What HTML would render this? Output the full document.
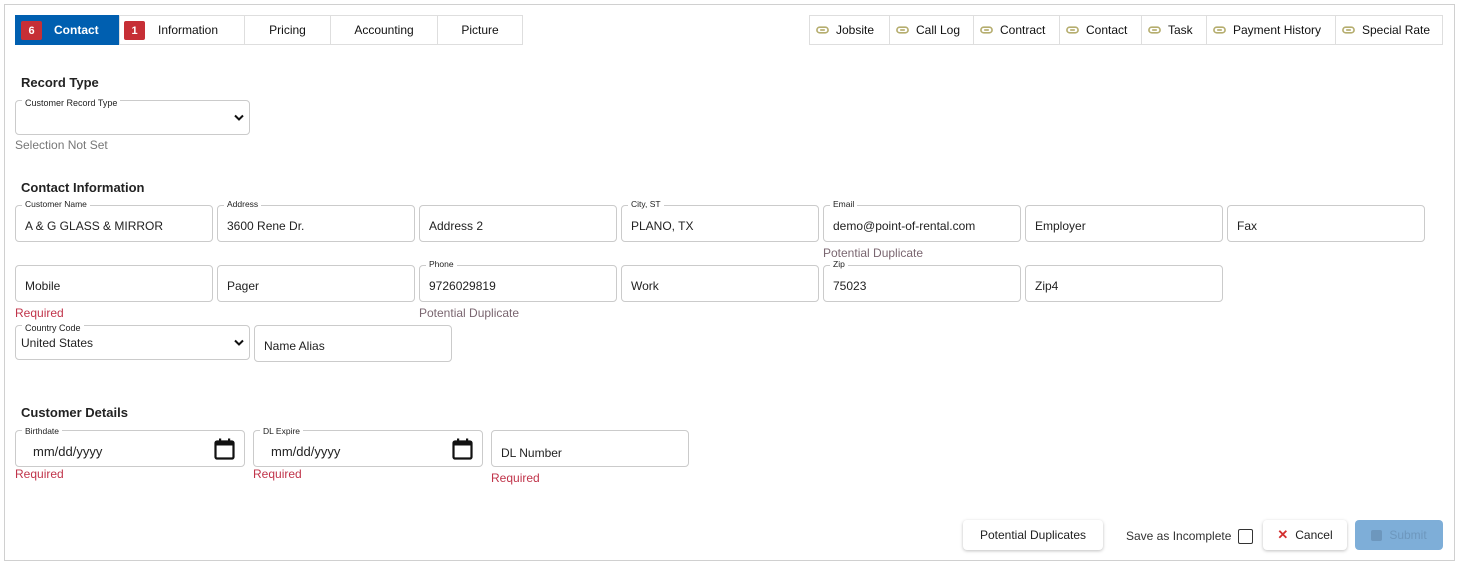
<!DOCTYPE html>
<html><head><meta charset="utf-8"><style>
*{box-sizing:border-box;margin:0;padding:0}
body{width:1459px;height:566px;background:#fff;font-family:"Liberation Sans",Arial,sans-serif;position:relative;overflow:hidden;color:#222}
.frame{position:absolute;left:4px;top:4px;width:1451px;height:557px;border:1px solid #d0d0d0}
.a{position:absolute}
.tab{position:absolute;top:15px;height:30px;border:1px solid #dedede;font-size:12px;display:flex;align-items:center;justify-content:center;color:#111}
.badge{position:absolute;top:5px;width:21px;height:19px;background:#c62f36;color:#fff;font-size:11px;font-weight:bold;border-radius:2px;display:flex;align-items:center;justify-content:center}
.rt{position:absolute;top:15px;height:30px;border:1px solid #dedede;font-size:12px;display:flex;align-items:center;padding-left:6px;color:#111}
.rt svg{margin-right:7px}
h3{position:absolute;font-size:13px;font-weight:bold;color:#222}
.f{position:absolute;height:37px;border:1px solid #cbcbcb;border-radius:4px;font-size:12px;color:#222;padding-left:9px;display:flex;align-items:center;padding-top:5px}
.f.v{padding-top:4px}
.lb{position:absolute;top:-7px;left:6px;font-size:8.5px;background:#fff;padding:0 3px;color:#222;line-height:10px}
.err{position:absolute;font-size:12px;color:#c0344a}
.dup{position:absolute;font-size:12px;color:#7a6670}
</style></head><body>
<div class="frame"></div>

<div class="tab" style="left:15px;width:105px;background:#005fb0;border-color:#005fb0;color:#fff;font-weight:bold;justify-content:flex-start;padding-left:38px">Contact<div class="badge" style="left:5px">6</div></div>
<div class="tab" style="left:119px;width:126px;justify-content:flex-start;padding-left:38px">Information<div class="badge" style="left:4px">1</div></div>
<div class="tab" style="left:244px;width:87px">Pricing</div>
<div class="tab" style="left:330px;width:108px">Accounting</div>
<div class="tab" style="left:437px;width:86px">Picture</div>

<svg width="0" height="0" style="position:absolute"><defs><symbol id="lk" viewBox="0 0 14 8"><rect x="1" y="1" width="12" height="6" rx="3" fill="none" stroke="#b5ad6e" stroke-width="1.8"/><line x1="4.5" y1="4" x2="9.5" y2="4" stroke="#b5ad6e" stroke-width="1.8"/></symbol></defs></svg>
<div class="rt" style="left:809px;width:81px"><svg width="13" height="8"><use href="#lk"/></svg>Jobsite</div>
<div class="rt" style="left:889px;width:85px"><svg width="13" height="8"><use href="#lk"/></svg>Call Log</div>
<div class="rt" style="left:973px;width:87px"><svg width="13" height="8"><use href="#lk"/></svg>Contract</div>
<div class="rt" style="left:1059px;width:83px"><svg width="13" height="8"><use href="#lk"/></svg>Contact</div>
<div class="rt" style="left:1141px;width:66px"><svg width="13" height="8"><use href="#lk"/></svg>Task</div>
<div class="rt" style="left:1206px;width:130px"><svg width="13" height="8"><use href="#lk"/></svg>Payment History</div>
<div class="rt" style="left:1335px;width:108px"><svg width="13" height="8"><use href="#lk"/></svg>Special Rate</div>

<h3 style="left:21px;top:75px">Record Type</h3>
<div class="f" style="left:15px;top:100px;width:235px;height:35px"><span class="lb" style="top:-3px;font-size:9px">Customer Record Type</span><svg class="a" style="right:5px;top:13px" width="10" height="7"><path d="M1 1.5L5 5.5L9 1.5" stroke="#111" stroke-width="2" fill="none"/></svg></div>
<div class="dup" style="left:15px;top:138px;color:#777">Selection Not Set</div>

<h3 style="left:21px;top:180px">Contact Information</h3>
<div class="f v" style="left:15px;top:205px;width:198px"><span class="lb">Customer Name</span>A &amp; G GLASS &amp; MIRROR</div>
<div class="f v" style="left:217px;top:205px;width:198px"><span class="lb">Address</span>3600 Rene Dr.</div>
<div class="f" style="left:419px;top:205px;width:198px">Address 2</div>
<div class="f v" style="left:621px;top:205px;width:198px"><span class="lb">City, ST</span>PLANO, TX</div>
<div class="f v" style="left:823px;top:205px;width:198px"><span class="lb">Email</span>demo@point-of-rental.com</div>
<div class="f" style="left:1025px;top:205px;width:198px">Employer</div>
<div class="f" style="left:1227px;top:205px;width:198px">Fax</div>
<div class="dup" style="left:823px;top:246px">Potential Duplicate</div>

<div class="f" style="left:15px;top:265px;width:198px">Mobile</div>
<div class="f" style="left:217px;top:265px;width:198px">Pager</div>
<div class="f v" style="left:419px;top:265px;width:198px"><span class="lb">Phone</span>9726029819</div>
<div class="f" style="left:621px;top:265px;width:198px">Work</div>
<div class="f v" style="left:823px;top:265px;width:198px"><span class="lb">Zip</span>75023</div>
<div class="f" style="left:1025px;top:265px;width:198px">Zip4</div>
<div class="err" style="left:15px;top:306px">Required</div>
<div class="dup" style="left:419px;top:306px">Potential Duplicate</div>

<div class="f" style="left:15px;top:325px;width:235px;height:35px;padding-left:5px;padding-top:0;align-items:flex-start"><span class="lb" style="top:-3px;font-size:9px">Country Code</span><span style="margin-top:10px">United States</span><svg class="a" style="right:5px;top:13px" width="10" height="7"><path d="M1 1.5L5 5.5L9 1.5" stroke="#111" stroke-width="2" fill="none"/></svg></div>
<div class="f" style="left:254px;top:325px;width:198px">Name Alias</div>

<h3 style="left:21px;top:405px">Customer Details</h3>
<div class="f" style="left:15px;top:430px;width:230px;padding-left:17px;font-size:13px"><span class="lb" style="top:-5px">Birthdate</span>mm/dd/yyyy<svg class="a" style="right:9px;top:7px" width="21" height="22" viewBox="0 0 21 22"><rect x="1.5" y="3.5" width="18" height="17" rx="1.5" fill="none" stroke="#111" stroke-width="2.2"/><rect x="1.5" y="3.5" width="18" height="4" fill="#111"/><rect x="5" y="0.5" width="2.2" height="4" fill="#111"/><rect x="14" y="0.5" width="2.2" height="4" fill="#111"/></svg></div>
<div class="f" style="left:253px;top:430px;width:230px;padding-left:17px;font-size:13px"><span class="lb" style="top:-5px">DL Expire</span>mm/dd/yyyy<svg class="a" style="right:9px;top:7px" width="21" height="22" viewBox="0 0 21 22"><rect x="1.5" y="3.5" width="18" height="17" rx="1.5" fill="none" stroke="#111" stroke-width="2.2"/><rect x="1.5" y="3.5" width="18" height="4" fill="#111"/><rect x="5" y="0.5" width="2.2" height="4" fill="#111"/><rect x="14" y="0.5" width="2.2" height="4" fill="#111"/></svg></div>
<div class="f" style="left:491px;top:430px;width:198px;padding-top:8px">DL Number</div>
<div class="err" style="left:15px;top:467px">Required</div>
<div class="err" style="left:253px;top:467px">Required</div>
<div class="err" style="left:491px;top:471px">Required</div>

<div class="a" style="left:963px;top:520px;width:140px;height:30px;border-radius:4px;box-shadow:0 1px 3px rgba(0,0,0,.25);font-size:12px;display:flex;align-items:center;justify-content:center">Potential Duplicates</div>
<div class="a" style="left:1126px;top:529px;font-size:12px;color:#333">Save as Incomplete</div>
<div class="a" style="left:1238px;top:529px;width:15px;height:15px;border:1.5px solid #333;border-radius:2px"></div>
<div class="a" style="left:1263px;top:520px;width:84px;height:30px;border-radius:4px;box-shadow:0 1px 3px rgba(0,0,0,.25);font-size:12px;display:flex;align-items:center;justify-content:center"><span style="color:#d32f2f;font-weight:bold;margin-right:7px;font-size:13px">✕</span>Cancel</div>
<div class="a" style="left:1355px;top:520px;width:88px;height:30px;border-radius:4px;background:#7eaed8;font-size:12px;color:#6d97bd;display:flex;align-items:center;justify-content:center"><span style="display:inline-block;width:11px;height:11px;background:#6d97bd;border-radius:2px;margin-right:7px"></span>Submit</div>
</body></html>
